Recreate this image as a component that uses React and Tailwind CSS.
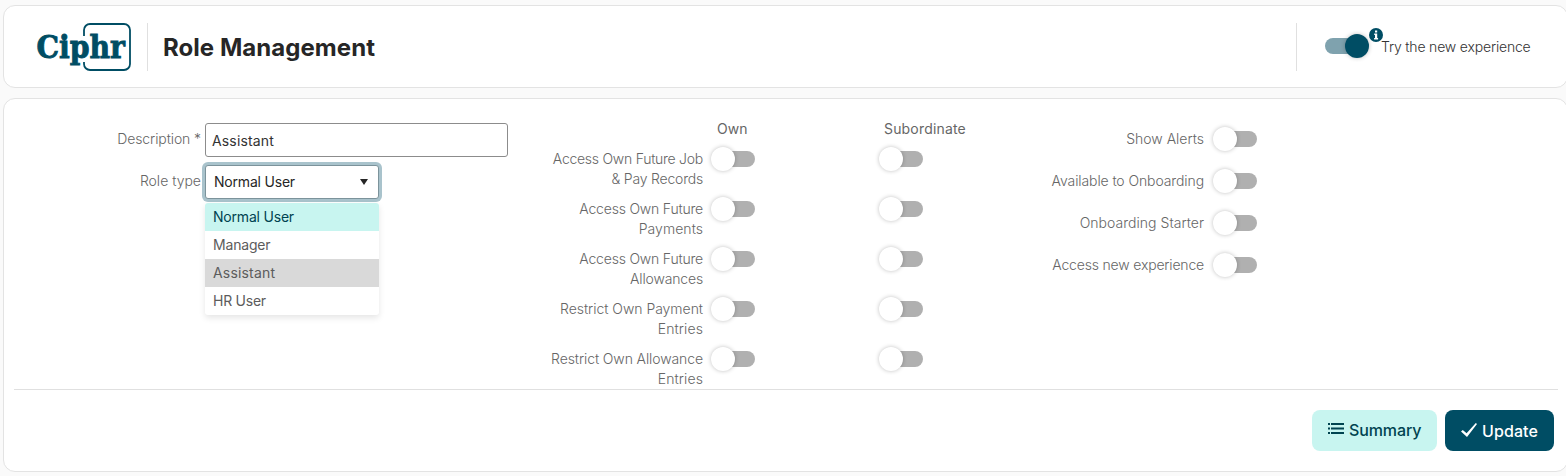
import React from 'react';
import clsx from 'clsx';

const accessRows = [
  [
    { text: 'Access Own Future Job', className: 'tracking-[-0.26px]' },
    { text: '& Pay Records', className: 'tracking-[-0.2px]' },
  ],
  [
    { text: 'Access Own Future', className: 'tracking-[-0.2px]' },
    { text: 'Payments', className: 'tracking-[0.05px]' },
  ],
  [
    { text: 'Access Own Future', className: 'tracking-[-0.2px]' },
    { text: 'Allowances', className: 'tracking-[-0.15px]' },
  ],
  [
    { text: 'Restrict Own Payment', className: 'tracking-[-0.03px]' },
    { text: 'Entries', className: 'tracking-[0.1px]' },
  ],
  [
    { text: 'Restrict Own Allowance', className: 'tracking-[-0.1px]' },
    { text: 'Entries', className: 'tracking-[0.1px]' },
  ],
];

const flags = [
  { text: 'Show Alerts', className: '' },
  { text: 'Available to Onboarding', className: 'tracking-[-0.1px]' },
  { text: 'Onboarding Starter', className: 'tracking-[0.03px]' },
  { text: 'Access new experience', className: 'tracking-[-0.18px]' },
];

const roleTypes = [
  { text: 'Normal User', className: 'bg-[#c8f5f0] text-[#004350] tracking-[-0.2px]' },
  { text: 'Manager', className: 'tracking-[-0.18px]' },
  { text: 'Assistant', className: 'bg-[#d9d9d9] tracking-[0.18px]' },
  { text: 'HR User', className: 'tracking-[-0.25px]' },
];

const Toggle = ({ on = false }) => (
  <span className={clsx('flex h-6 w-11 shrink-0 items-center', on && 'justify-end')}>
    {on ? (
      <>
        <span className="h-4 w-8 rounded-full bg-[#7fa2ae]"></span>
        <span className="-ml-3 h-6 w-6 rounded-full bg-[#004d64] shadow-[0_0_4px_rgba(0,0,0,0.25)]"></span>
      </>
    ) : (
      <>
        <span className="z-10 h-6 w-6 rounded-full bg-white shadow-[0_0_4px_rgba(0,0,0,0.25)]"></span>
        <span className="-ml-3 h-4 w-8 rounded-full bg-[#b0b0b0]"></span>
      </>
    )}
  </span>
);

const Logo = () => (
  <svg className="h-[50px] w-[98px] shrink-0 overflow-visible" viewBox="0 0 98 50" fill="none">
    <path
      d="M49 14V8a6 6 0 0 1 6-6H89a6 6 0 0 1 6 6V42a6 6 0 0 1-6 6H55a6 6 0 0 1-6-6V40"
      stroke="#004d64"
      strokeWidth="1.8"
    />
    <text
      x="1.5"
      y="36"
      fill="#004d64"
      stroke="#004d64"
      strokeWidth="0.9"
      fontFamily="DejaVu Serif, serif"
      fontWeight="700"
      fontSize="31"
      textLength="88.5"
      lengthAdjust="spacingAndGlyphs"
    >
      Ciphr
    </text>
  </svg>
);

const Header = () => (
  <header className="flex h-[83px] w-[1565px] items-center rounded-xl border border-[#e3e3e3] bg-white pl-[31px]">
    <Logo />
    <div className="ml-[14px] h-12 w-px bg-[#e0e0e0]"></div>
    <h1 className="ml-[15px] pt-0.5 text-2xl font-bold tracking-[0.05px] text-[#262626]">Role Management</h1>
    <div className="ml-auto h-12 w-px bg-[#e0e0e0]"></div>
    <div className="ml-7 flex w-[242px] items-center">
      <div className="mb-0.5">
        <Toggle on />
      </div>
      <svg className="mb-6 h-[14px] w-[14px] shrink-0" viewBox="0 0 14 14">
        <circle cx="7" cy="7" r="7" fill="#004d64" />
        <path d="M6 2.5h2.2v2H6zM5.2 5.6h3v4.5h.9v1.3H5.1v-1.3h.9V6.9h-.8z" fill="#fff" />
      </svg>
      <span className="-ml-0.5 whitespace-nowrap text-sm font-light tracking-[-0.18px] text-[#333]">
        Try the new experience
      </span>
    </div>
  </header>
);

const RoleSelect = () => (
  <div className="relative">
    <div className="flex h-[34px] w-[174px] items-center justify-between rounded-[3px] border border-[#7c939b] bg-white pl-2 pr-[10px] text-sm tracking-[-0.2px] text-[#262626] ring-[3px] ring-[#a9c3cc]">
      <span>Normal User</span>
      <svg className="h-[6px] w-2" viewBox="0 0 8 6">
        <path d="M0 0h8L4 6z" fill="#262626" />
      </svg>
    </div>
    <ul className="absolute left-0 top-[38px] w-[174px] overflow-hidden rounded-[3px] bg-white text-sm text-[#5c5c5c] shadow-[0_3px_6px_rgba(0,0,0,0.1)]">
      {roleTypes.map(type => (
        <li key={type.text} className={clsx('flex h-7 items-center px-2', type.className)}>
          {type.text}
        </li>
      ))}
    </ul>
  </div>
);

const App = () => {
  return (
    <div className="h-[476px] w-full overflow-hidden bg-[#fafafa] pl-[3px] pt-[5px] font-['Inter','Open_Sans',sans-serif]">
      <Header />

      <main className="mt-[10px] h-[374px] w-[1565px] rounded-xl border border-[#e3e3e3] bg-white">
        <div className="flex h-[290px] text-sm font-light text-[#666]">
          {/* Role details */}
          <div className="w-[504px] pt-6">
            <div className="flex h-[42px]">
              <label className="w-[197px] pt-[6px] text-right tracking-[-0.1px]">Description *</label>
              <div className="ml-1 flex h-[34px] w-[303px] items-center rounded-[3px] border border-[#8c8c8c] pl-[6px] pt-0.5 font-normal tracking-[0.15px] text-[#333]">
                Assistant
              </div>
            </div>
            <div className="flex font-normal">
              <label className="w-[197px] pt-[6px] text-right font-light">Role type</label>
              <div className="ml-1">
                <RoleSelect />
              </div>
            </div>
          </div>

          {/* Access rights */}
          <div className="w-[459px] pt-5">
            <div className="flex h-[30px] font-normal">
              <span className="ml-[209px] w-[167px]">Own</span>
              <span className="tracking-[0.18px]">Subordinate</span>
            </div>
            {accessRows.map((lines, index) => (
              <div key={index} className="flex h-[50px]">
                <div className="w-[195px] text-right leading-5">
                  {lines.map(line => (
                    <div key={line.text} className={line.className}>
                      {line.text}
                    </div>
                  ))}
                </div>
                <div className="-mt-0.5 ml-2 w-[168px]">
                  <Toggle />
                </div>
                <div className="-mt-0.5">
                  <Toggle />
                </div>
              </div>
            ))}
          </div>

          {/* Flags */}
          <div className="w-[290px] pt-[19px]">
            {flags.map(flag => (
              <div key={flag.text} className="flex h-[42px] items-center justify-end">
                <span className={clsx('mr-[9px]', flag.className)}>{flag.text}</span>
                <Toggle />
              </div>
            ))}
          </div>
        </div>

        <div className="ml-[10px] mr-[9px] h-px bg-[#e0e0e0]"></div>

        <div className="mr-[13px] mt-5 flex justify-end gap-2 text-base font-medium">
          <button className="flex h-[41px] w-[125px] items-center rounded-lg bg-[#c8f5f0] pb-0.5 pl-4 tracking-[-0.1px] text-[#004350]">
            <svg className="mb-0.5 mr-[5px] h-[11px] w-4 shrink-0" viewBox="0 0 16 11" fill="currentColor">
              <path d="M0 0h2v2H0zM3 0h13v2H3zM0 4.5h2v2H0zM3 4.5h13v2H3zM0 9h2v2H0zM3 9h13v2H3z" />
            </svg>
            Summary
          </button>
          <button className="flex h-[41px] w-[109px] items-center rounded-lg bg-[#004d64] pl-4 tracking-[0.1px] text-white">
            <svg className="mb-0.5 mr-[5px] h-[14px] w-4 shrink-0" viewBox="0 0 16 14" fill="currentColor">
              <path d="M0 8.5 1.8 7 5.6 10.2 14.8 0 16 1 6 14z" />
            </svg>
            Update
          </button>
        </div>
      </main>
    </div>
  );
};

export default App;
